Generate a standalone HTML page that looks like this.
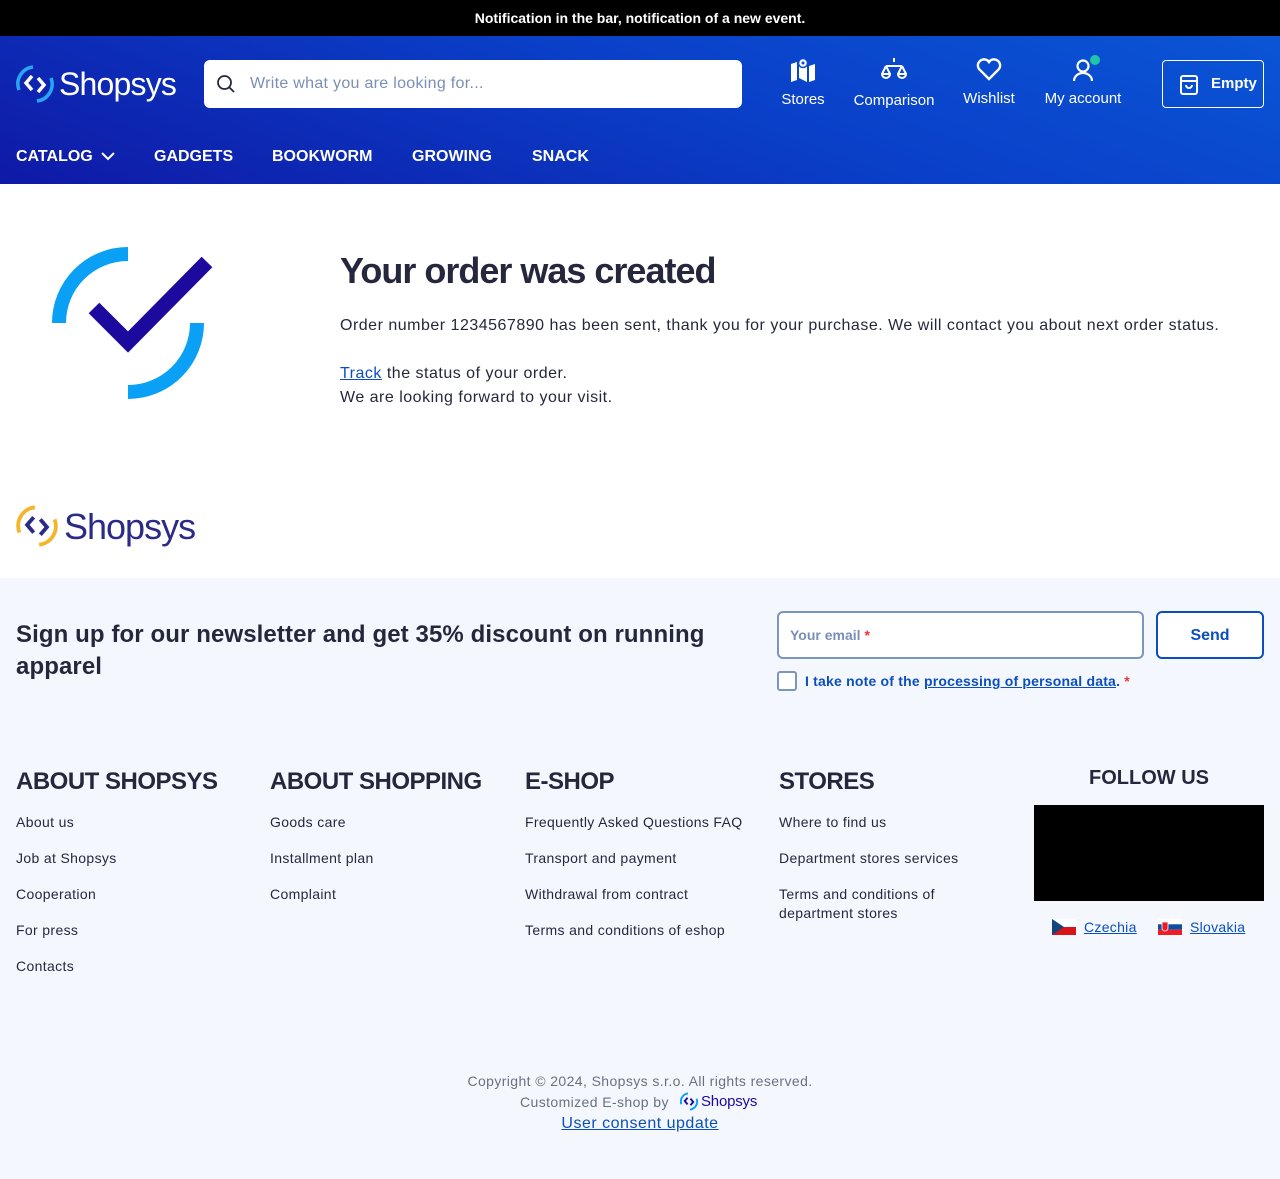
<!DOCTYPE html>
<html><head><meta charset="utf-8"><style>
*{box-sizing:border-box;margin:0;padding:0}
body{width:1280px;height:1179px;font-family:"Liberation Sans",sans-serif;color:#25283d;background:#fff;position:relative;overflow:hidden}
.abs{position:absolute}
.top{height:36px;background:#000;color:#fff;font-weight:bold;font-size:14px;text-align:center;line-height:36px}
.hdr{position:absolute;top:36px;left:0;width:1280px;height:148px;background:linear-gradient(200deg,#0a55d6 0%,#0a3fc8 45%,#0f19a6 100%)}
.search{left:204px;top:24px;width:538px;height:48px;background:#fff;border-radius:6px}
.search span{position:absolute;left:46px;top:15px;font-size:16px;color:#7a8fb5;letter-spacing:.3px}
.ic{color:#fff;font-size:15px;text-align:center;top:22px}
.nav{top:111px;color:#fff;font-weight:bold;font-size:16px}
.cart{left:1162px;top:24px;width:102px;height:48px;border:1px solid #fff;border-radius:4px;color:#fff;font-weight:bold;font-size:15px}
h1{position:absolute;left:340px;top:250px;font-size:36px;letter-spacing:-1px;font-weight:bold;color:#25283d}
.txt{font-size:16px;color:#25283d;letter-spacing:.5px}
a{color:#0b4fbf;text-decoration:underline}
.foot{position:absolute;top:578px;left:0;width:1280px;height:601px;background:#f4f8fe}
.col h3{font-size:24px;font-weight:bold;color:#25283d;margin-bottom:17px;letter-spacing:-.5px}
.col div{font-size:14px;margin-bottom:17px;line-height:19px;letter-spacing:.35px}
</style></head><body>
<div class="top">Notification in the bar, notification of a new event.</div>
<div class="hdr">
 <svg class="abs" style="left:16px;top:28px" width="38" height="40" viewBox="0 0 38 40"><path d="M17 3A17 17 0 0 0 3 26" stroke="#2aa4f4" stroke-width="3.5" fill="none"/><path d="M21 37A17 17 0 0 0 35 14" stroke="#2aa4f4" stroke-width="3.5" fill="none"/><path d="M16 12l-6 7 6 7M22 14l6 7-6 7" stroke="#fff" stroke-width="3.5" fill="none"/></svg>
 <div class="abs" style="left:59px;top:30px;color:#fff;font-size:32px;letter-spacing:-.8px">Shopsys</div>
 <div class="abs search"><svg class="abs" style="left:12px;top:14px" width="20" height="20" viewBox="0 0 20 20"><circle cx="8.5" cy="8.5" r="6.5" stroke="#25283d" stroke-width="1.8" fill="none"/><path d="M13 13l5 5" stroke="#25283d" stroke-width="1.8"/></svg><span>Write what you are looking for...</span></div>
 <div class="abs ic" style="left:780px;width:46px"><svg width="26" height="24" viewBox="0 0 26 24"><path d="M1 6l6-2v18l-6 2zM9 4l8 4v16l-8-4zM19 8l6-2v16l-6 2z" fill="#fff"/><circle cx="13" cy="5" r="4.5" fill="#fff" stroke="#0a4cd0" stroke-width="1.5"/><circle cx="13" cy="5" r="1.5" fill="#0a4cd0"/></svg><div style="margin-top:5px">Stores</div></div>
 <div class="abs ic" style="left:852px;width:84px"><svg width="26" height="24" viewBox="0 0 26 24"><path d="M13 0v4M5 8h16M5 8l-4 8M5 8l4 8M21 8l-4 8M21 8l4 8M1 16a4 4 0 0 0 8 0zM17 16a4 4 0 0 0 8 0z" stroke="#fff" stroke-width="2" fill="none"/></svg><div style="margin-top:6px">Comparison</div></div>
 <div class="abs ic" style="left:960px;width:58px"><svg width="26" height="24" viewBox="0 0 26 24"><path d="M13 21L3 11a5.5 5.5 0 0 1 10-7a5.5 5.5 0 0 1 10 7z" stroke="#fff" stroke-width="2.4" fill="none"/></svg><div style="margin-top:4px">Wishlist</div></div>
 <div class="abs ic" style="left:1042px;width:82px"><svg width="26" height="24" viewBox="0 0 26 24"><circle cx="13" cy="8" r="5.5" stroke="#fff" stroke-width="2.2" fill="none"/><path d="M4 23a9 8 0 0 1 18 0" stroke="#fff" stroke-width="2.2" fill="none"/></svg><div style="margin-top:4px">My account</div></div>
 <div class="abs" style="left:1090px;top:19px;width:10px;height:10px;border-radius:50%;background:#1ec5a8"></div>
 <div class="abs cart"><svg class="abs" style="left:16px;top:13px" width="20" height="22" viewBox="0 0 20 22"><rect x="2" y="2" width="16" height="18" rx="2" stroke="#fff" stroke-width="2" fill="none"/><path d="M2 7h16M7 11a3 3 0 0 0 6 0" stroke="#fff" stroke-width="2" fill="none"/></svg><span class="abs" style="left:48px;top:14px">Empty</span></div>
 <div class="abs nav" style="left:16px;top:112px">CATALOG <svg width="14" height="10" viewBox="0 0 14 10" style="margin-left:4px"><path d="M1 2l6 6 6-6" stroke="#fff" stroke-width="2" fill="none"/></svg></div>
 <div class="abs nav" style="left:154px;top:112px">GADGETS</div>
 <div class="abs nav" style="left:272px;top:112px">BOOKWORM</div>
 <div class="abs nav" style="left:412px;top:112px">GROWING</div>
 <div class="abs nav" style="left:532px;top:112px">SNACK</div>
</div>
<svg class="abs" style="left:40px;top:236px" width="180" height="175" viewBox="40 236 180 175"><path d="M59 323A69 69 0 0 1 128 254" stroke="#0aa0f5" stroke-width="14" fill="none"/><path d="M197 323A69 69 0 0 1 128 392" stroke="#0aa0f5" stroke-width="14" fill="none"/><path d="M94 308l34 34 79-80" stroke="#1c0a9e" stroke-width="15" fill="none"/></svg>
<h1>Your order was created</h1>
<div class="abs txt" style="left:340px;top:317px">Order number 1234567890 has been sent, thank you for your purchase. We will contact you about next order status.</div>
<div class="abs txt" style="left:340px;top:362px;line-height:24px"><a>Track</a> the status of your order.<br>We are looking forward to your visit.</div>
<svg class="abs" style="left:16px;top:504px" width="42" height="44" viewBox="0 0 38 40"><path d="M17 3A17 17 0 0 0 3 26" stroke="#f5b52a" stroke-width="3.5" fill="none"/><path d="M21 37A17 17 0 0 0 35 14" stroke="#f5b52a" stroke-width="3.5" fill="none"/><path d="M16 12l-6 7 6 7M22 14l6 7-6 7" stroke="#2b2a86" stroke-width="3.5" fill="none"/></svg>
<div class="abs" style="left:64px;top:506px;color:#2b2a86;font-size:36px;letter-spacing:-1px">Shopsys</div>
<div class="foot">
 <div class="abs" style="left:16px;top:41px;width:730px;font-size:24px;font-weight:bold;line-height:32px;letter-spacing:.1px">Sign up for our newsletter and get 35% discount on running apparel</div>
 <div class="abs" style="left:777px;top:33px;width:367px;height:48px;border:2px solid #7a95c0;border-radius:6px;background:#fff"><span class="abs" style="left:11px;top:14px;font-size:14px;font-weight:bold;color:#7a8fb5">Your email <span style="color:#e33">*</span></span></div>
 <div class="abs" style="left:1156px;top:33px;width:108px;height:48px;border:2px solid #0b4fbf;border-radius:6px;background:#fff;color:#0b4fbf;font-weight:bold;font-size:16px;text-align:center;line-height:46px">Send</div>
 <div class="abs" style="left:777px;top:93px;width:20px;height:20px;border:2px solid #7a95c0;border-radius:3px;background:#fff"></div>
 <div class="abs" style="left:805px;top:95px;font-size:14px;font-weight:bold;color:#0b4fbf;letter-spacing:.2px">I take note of the <a>processing of personal data</a>. <span style="color:#e33">*</span></div>
 <div class="abs col" style="left:16px;top:190px"><h3>ABOUT SHOPSYS</h3><div>About us</div><div>Job at Shopsys</div><div>Cooperation</div><div>For press</div><div>Contacts</div></div>
 <div class="abs col" style="left:270px;top:190px"><h3>ABOUT SHOPPING</h3><div>Goods care</div><div>Installment plan</div><div>Complaint</div></div>
 <div class="abs col" style="left:525px;top:190px"><h3>E-SHOP</h3><div>Frequently Asked Questions FAQ</div><div>Transport and payment</div><div>Withdrawal from contract</div><div>Terms and conditions of eshop</div></div>
 <div class="abs col" style="left:779px;top:190px;width:220px"><h3>STORES</h3><div>Where to find us</div><div>Department stores services</div><div>Terms and conditions of department stores</div></div>
 <div class="abs" style="left:1034px;top:189px;width:230px;text-align:center;font-size:20px;font-weight:bold">FOLLOW US</div>
 <div class="abs" style="left:1034px;top:227px;width:230px;height:96px;background:#000"></div>
 <svg class="abs" style="left:1052px;top:341px" width="24" height="16" viewBox="0 0 24 16"><rect width="24" height="8" fill="#fff"/><rect y="8" width="24" height="8" fill="#d7141a"/><path d="M0 0l12 8-12 8z" fill="#11457e"/></svg>
 <div class="abs" style="left:1084px;top:341px;font-size:14px;letter-spacing:.3px"><a>Czechia</a></div>
 <svg class="abs" style="left:1158px;top:341px" width="24" height="16" viewBox="0 0 24 16"><rect width="24" height="5.3" fill="#fff"/><rect y="5.3" width="24" height="5.4" fill="#0b4ea2"/><rect y="10.7" width="24" height="5.3" fill="#ee1c25"/><path d="M4 3h6v6a3 3 0 0 1-6 0z" fill="#ee1c25" stroke="#fff" stroke-width=".8"/></svg>
 <div class="abs" style="left:1190px;top:341px;font-size:14px;letter-spacing:.3px"><a>Slovakia</a></div>
 <div class="abs" style="left:0;top:495px;width:1280px;text-align:center;font-size:14px;color:#6b7080;letter-spacing:.4px">Copyright © 2024, Shopsys s.r.o. All rights reserved.</div>
 <div class="abs" style="left:520px;top:516px;font-size:14px;color:#6b7080;letter-spacing:.4px">Customized E-shop by</div>
 <svg class="abs" style="left:680px;top:514px" width="18" height="19" viewBox="0 0 38 40"><path d="M17 3A17 17 0 0 0 3 26" stroke="#0aa0f5" stroke-width="4" fill="none"/><path d="M21 37A17 17 0 0 0 35 14" stroke="#0aa0f5" stroke-width="4" fill="none"/><path d="M16 12l-6 7 6 7M22 14l6 7-6 7" stroke="#1c0a9e" stroke-width="4" fill="none"/></svg>
 <div class="abs" style="left:701px;top:515px;font-size:15px;color:#1c0a9e;letter-spacing:-.2px">Shopsys</div>
 <div class="abs" style="left:0;top:537px;width:1280px;text-align:center;font-size:16px;letter-spacing:.5px"><a>User consent update</a></div>
</div>
</body></html>
